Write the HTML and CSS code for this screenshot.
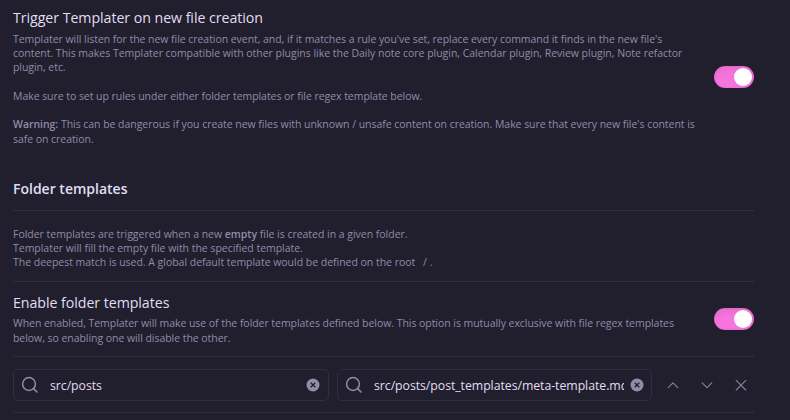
FILE: index.html
```html
<!DOCTYPE html>
<html lang="en">
<head>
<meta charset="utf-8">
<title>Templater settings</title>
<link rel="stylesheet" href="styles.css">
</head>
<body>
<main class="settings">
  <section class="item item-first">
    <div class="info">
      <div class="name">Trigger Templater on new file creation</div>
      <div class="desc">Templater will listen for the new file creation event, and, if it matches a rule you've set, replace every command it finds in the new file's<br><span class="wide">content. This makes Templater compatible with other plugins like the Daily note core plugin, Calendar plugin, Review plugin, Note refactor</span><br>plugin, etc.<br><br>Make sure to set up rules under either folder templates or file regex template below.<br><br><span class="warn"><b>Warning:</b> This can be dangerous if you create new files with unknown / unsafe content on creation. Make sure that every new file's content is</span><br>safe on creation.</div>
    </div>
    <div class="toggle"></div>
  </section>
  <section class="heading">Folder templates</section>
  <section class="item item-text">
    <div class="desc wide">Folder templates are triggered when a new <b>empty</b> file is created in a given folder.<br>Templater will fill the empty file with the specified template.<br>The deepest match is used. A global default template would be defined on the root <code>/</code>.</div>
  </section>
  <section class="item item-enable">
    <div class="info">
      <div class="name">Enable folder templates</div>
      <div class="desc">When enabled, Templater will make use of the folder templates defined below. This option is mutually exclusive with file regex templates<br>below, so enabling one will disable the other.</div>
    </div>
    <div class="toggle"></div>
  </section>
  <section class="item item-row">
    <div class="search">
      <svg class="lens" viewBox="0 0 18 18"><circle cx="8" cy="8" r="6.4"/><path d="M12.6 12.6 16 16"/></svg>
      <span class="value">src/posts</span>
      <svg class="clear" viewBox="0 0 14 14"><circle cx="7" cy="7" r="6.5"/><path d="m4.7 4.7 4.6 4.6M9.3 4.7 4.7 9.3"/></svg>
    </div>
    <div class="search">
      <svg class="lens" viewBox="0 0 18 18"><circle cx="8" cy="8" r="6.4"/><path d="M12.6 12.6 16 16"/></svg>
      <span class="value">src/posts/post_templates/meta-template.md</span>
      <svg class="clear" viewBox="0 0 14 14"><circle cx="7" cy="7" r="6.5"/><path d="m4.7 4.7 4.6 4.6M9.3 4.7 4.7 9.3"/></svg>
    </div>
    <div class="actions">
      <svg viewBox="0 0 14 14"><path d="m2.2 9.7 4.8-4.8 4.8 4.8"/></svg>
      <svg viewBox="0 0 14 14"><path d="m2.2 4.9 4.8 4.8 4.8-4.8"/></svg>
      <svg viewBox="0 0 14 14"><path d="m2.2 2.4 9.6 9.6M11.8 2.4 2.2 12"/></svg>
    </div>
  </section>
</main>
</body>
</html>
```
FILE: styles.css
```css
* { box-sizing: border-box; }

body {
  margin: 0;
  height: 420px;
  overflow: hidden;
  background: #211e2d;
  color: #e0def4;
  font-family: "Open Sans", "Noto Sans", sans-serif;
}

.settings {
  width: 741px;
  margin-left: 13px;
  padding-top: 8px;
}

.item {
  display: flex;
  align-items: center;
  border-bottom: 1px solid #312e40;
}

.item-first {
  height: 138px;
  border: 0;
}

.item-text { height: 71px; }
.item-enable { height: 75px; }
.item-row { height: 56px; }

.info { flex: 1; }

.name {
  font-size: 14.2px;
  line-height: 19.5px;
  letter-spacing: -0.05px;
  white-space: nowrap;
}

.desc {
  padding-top: 4px;
  color: #908caa;
  font-size: 10.5px;
  line-height: 14.3px;
  letter-spacing: -0.05px;
  white-space: nowrap;
}

.wide { letter-spacing: -0.025px; }
.warn { letter-spacing: -0.04px; }
.desc b { font-weight: 600; }

.desc code {
  padding: 0 3px 0 5px;
  font: inherit;
}

.heading {
  display: flex;
  align-items: center;
  height: 65px;
  padding-top: 20px;
  border-bottom: 1px solid #312e40;
  font-size: 14px;
  font-weight: 600;
}

.toggle {
  display: flex;
  flex: none;
  justify-content: flex-end;
  width: 40px;
  height: 22px;
  padding: 2px;
  border-radius: 11px;
  background: #f875dd;
  box-shadow: inset 0 4px 8px rgba(0, 0, 0, 0.07), inset 0 0 2px rgba(0, 0, 0, 0.15);
}

.toggle::after {
  content: "";
  width: 18px;
  height: 18px;
  border-radius: 50%;
  background: #fff;
}

.search {
  display: flex;
  flex: none;
  align-items: center;
  width: 316px;
  height: 32px;
  margin-right: 8px;
  padding: 0 8.5px 0 8px;
  border: 1px solid #312e40;
  border-radius: 5px;
}

.search + .search {
  width: 315px;
  padding-right: 7.5px;
}

.lens {
  flex: none;
  width: 18px;
  height: 18px;
  margin: 0 11px 0 -1px;
  fill: none;
  stroke: #908caa;
  stroke-width: 1.5;
  stroke-linecap: round;
}

.value {
  flex: 1;
  min-width: 0;
  overflow: hidden;
  padding-top: 1px;
  font-size: 12.3px;
  letter-spacing: -0.05px;
  white-space: nowrap;
}

.clear {
  flex: none;
  width: 14px;
  height: 14px;
  margin-left: 6px;
  fill: #908caa;
  stroke: #211e2d;
  stroke-width: 1.3;
}

.clear circle { stroke: none; }

.actions {
  display: flex;
  gap: 20px;
  margin-left: 6px;
}

.actions svg {
  width: 14px;
  height: 14px;
  fill: none;
  stroke: #858199;
  stroke-width: 1.1;
  stroke-linecap: round;
  stroke-linejoin: round;
}
```
